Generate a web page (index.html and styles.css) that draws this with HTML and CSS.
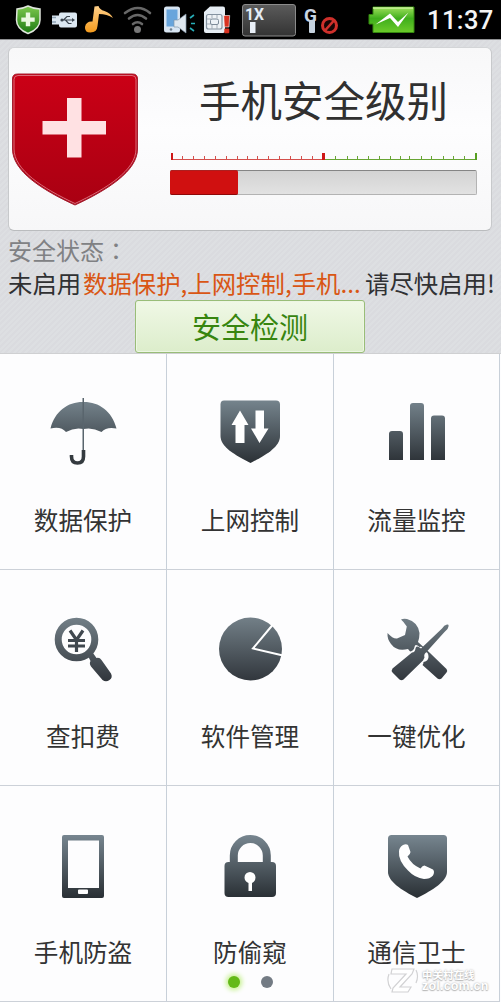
FILE: index.html
```html
<!DOCTYPE html>
<html lang="zh-CN">
<head>
<meta charset="utf-8">
<title>手机安全</title>
<link rel="stylesheet" href="styles.css">
</head>
<body>
<div class="phone">
  <div class="statusbar">
    <svg class="status-icons" width="420" height="39" viewBox="0 0 420 39">
      <defs>
        <linearGradient id="gshield" x1="0" y1="0" x2="0" y2="1"><stop offset="0" stop-color="#7cc84c"/><stop offset="1" stop-color="#1c7a12"/></linearGradient>
        <linearGradient id="note" x1="0" y1="0" x2="0" y2="1"><stop offset="0" stop-color="#ffd08a"/><stop offset="1" stop-color="#f39a1c"/></linearGradient>
        <linearGradient id="sig" x1="0" y1="0" x2="0" y2="1"><stop offset="0" stop-color="#5b5b5b"/><stop offset="1" stop-color="#333"/></linearGradient>
        <linearGradient id="bat" x1="0" y1="0" x2="0" y2="1"><stop offset="0" stop-color="#9fe05c"/><stop offset=".45" stop-color="#3fae1c"/><stop offset="1" stop-color="#6ccb2a"/></linearGradient>
      </defs>
      <path d="M17 9q5 0 11-3q6 3 12 3v11q0 9-12 13.500Q16.500 29 16.500 20z" fill="url(#gshield)" stroke="#dfe5dc" stroke-width="1.500"/>
      <path d="M25.800 12.500h4.400v5h4.500v4.300h-4.500v4.500h-4.400v-4.500h-4.500v-4.300h4.500z" fill="#eaf8e0"/>
      <path d="M52 15.500h7v-1q0-2 2-2h14q2 0 2 2v11q0 2-2 2H61q-2 0-2-2v-1h-7z" fill="#dce8f2"/>
      <path d="M52 17.500h4M52 22h4" stroke="#8fa3b5" stroke-width="1.500"/>
      <path d="M61 20h12M63.500 20l3.500-3.500h3M65.500 20l3 3.500h3" fill="none" stroke="#3c4650" stroke-width="1.200"/><circle cx="62" cy="20" r="1.600" fill="#3c4650"/><path d="M72 18l3 2-3 2z" fill="#3c4650"/>
      <path d="M94.500 6.500l4-.5q1 3.500 6 5 6 2 8.500 7-6-4-14-4l-1.500 12q-.5 6.500-7 6.500-6 0-5.500-5.500 1-6 7.500-5.500z" fill="url(#note)"/>
      <g fill="none" stroke="#686868" stroke-width="2.600" stroke-linecap="round"><path d="M125 13q13-10 25 0"/><path d="M129 18.500q8.500-7 17 0"/><path d="M133 24q4.500-3.500 9 0"/></g><circle cx="137.500" cy="29.500" r="3.500" fill="#777"/>
      <rect x="164" y="6.500" width="16" height="26" rx="2.500" fill="#d8e5f2"/><rect x="166.500" y="9.500" width="11" height="17" fill="#68a5dc"/><circle cx="171" cy="29.500" r="1.300" fill="#70808e"/>
      <path d="M174 20h4l8-6v19l-8-6h-4z" fill="#dfe8f0" stroke="#8295a8" stroke-width=".7"/><path d="M190 18l4-3M191 23.500h4M190 28l4 3" stroke="#27aeb8" stroke-width="1.600"/>
      <path d="M204 12l6-5.500h13q2 0 2 2V31q0 2-2 2h-17q-2 0-2-2z" fill="#e6edf3"/><rect x="206.500" y="14.500" width="15.500" height="14.500" rx="2" fill="#eef2f5" stroke="#8593a0" stroke-width="1.200"/><path d="M207 19h4M207 24h4M212 15v3M217 15v3M212 25v4M217 25v4" stroke="#a3adb7"/><rect x="210.500" y="19" width="8" height="5.500" rx="1.500" fill="#edf2f6" stroke="#7d8b98"/>
      <path d="M223.700 15.500h6l-.7 11.500h-4.600z" fill="#d93220" stroke="#fff" stroke-width=".6"/><rect x="224.300" y="28.500" width="5" height="4.800" rx="1" fill="#d93220"/>
      <rect x="242.500" y="4.500" width="53" height="31.500" rx="2.500" fill="url(#sig)" stroke="#8b8b8b"/>
      <text class="net-label" x="245" y="20" textLength="19" lengthAdjust="spacingAndGlyphs">1X</text><rect x="250" y="22" width="5.500" height="11" fill="#e9eff7"/>
      <text class="net-g" x="304" y="22">G</text><rect x="309" y="20" width="6" height="13" rx="1" fill="#c6d2de"/>
      <circle cx="329.500" cy="25.500" r="7" fill="#160505" stroke="#cf302b" stroke-width="3"/><path d="M325 30.500l9-10" stroke="#cf302b" stroke-width="2.600"/>
      <path d="M369 14.500h4v-7.500h41v25.500h-41v-8.500h-4z" fill="url(#bat)" stroke="#35880f"/><path d="M373 8h40" stroke="#c8f09a" stroke-width="1.400"/>
      <path d="M375.500 24.500L390 13.500l8 8.500 10.500-9.500-10.500 14.500-8-9z" fill="#fff"/>
    </svg>
    <span class="clock">11:37</span>
  </div>

  <div class="header">
    <div class="level-card">
      <svg class="level-shield" width="128" height="134" viewBox="11 73 128 134">
        <defs><linearGradient id="red" x1="0" y1="0" x2="0" y2="1"><stop offset="0" stop-color="#cb0016"/><stop offset="1" stop-color="#a90012"/></linearGradient></defs>
        <path d="M17.500 74h115q5 0 5 5v70c0 22-30 41-62.500 56C42 190 12.500 171 12.500 149V79q0-5 5-5z" fill="url(#red)" stroke="#a32030" stroke-width="1"/>
        <path d="M18 75.500h114q4 0 4 4v69.500c0 21-29 39.500-61 54.500C43 188.500 14 170 14 149V79.500q0-4 4-4z" fill="none" stroke="#dc7884" stroke-width=".9"/>
        <path d="M67 98h14.500v23H106v13.500H81.500v23H67v-23H42.500V121H67z" fill="#ffe1e3"/>
      </svg>
      <div class="level-info">
        <h1 class="level-title">手机安全级别</h1>
        <svg class="scale" width="307" height="8" viewBox="0 0 307 8">
          <path d="M1 6h152v1H1zM12 3h1v3h-1zM23 3h1v3h-1zM34 3h1v3h-1zM45 3h1v3h-1zM56 3h1v3h-1zM67 3h1v3h-1zM77 3h1v3h-1zM87 3h1v3h-1zM98 3h1v3h-1zM109 3h1v3h-1zM120 3h1v3h-1zM131 3h1v3h-1zM142 3h1v3h-1z" fill="#d4504c"/>
          <path d="M155 6h152v1H155zM165 3h1v3h-1zM177 3h1v3h-1zM187 3h1v3h-1zM198 3h1v3h-1zM209 3h1v3h-1zM220 3h1v3h-1zM230 3h1v3h-1zM239 3h1v3h-1zM251 3h1v3h-1zM261 3h1v3h-1zM273 3h1v3h-1zM283 3h1v3h-1zM294 3h1v3h-1z" fill="#68a534"/>
          <path d="M1 0h2v7H1zM152 0h3v7h-3z" fill="#ce1717"/><path d="M305 0h2v7h-2z" fill="#579f22"/>
        </svg>
        <div class="meter"><div class="meter-fill"></div></div>
      </div>
    </div>
    <div class="state-label">安全状态<span class="colon" lang="zh-TW">：</span></div>
    <div class="state-line"><span class="lead">未启用</span><span class="missing">数据保护,上网控制,手机...</span><span class="tail">请尽快启用!</span></div>
    <div class="check-btn">安全检测</div>
  </div>

  <div class="grid">
    <div class="cell">
      <svg class="icon" viewBox="43 393 80 80">
        <defs><linearGradient id="m1" gradientUnits="userSpaceOnUse" x1="0" y1="398" x2="0" y2="465"><stop offset="0" stop-color="#788790"/><stop offset="1" stop-color="#292e33"/></linearGradient></defs>
        <path d="M50.500 428.500C55 411 68 402 82.500 402h1.500c15 0 28 9 32.500 26.500q-10-2-15 3.500-9-5-18-3-9-2-17.500 3-5-6-15.500-3.500z" fill="url(#m1)"/>
        <path d="M82.500 398h1.500v53h-1.500z" fill="#59656d"/><path d="M83.500 450v6.500q0 6.500-6 6.500t-6-6.500v-1.500" fill="none" stroke="#343a3f" stroke-width="3.600"/>
      </svg><span class="label">数据保护</span>
    </div>
    <div class="cell">
      <svg class="icon" viewBox="210 393 80 80">
        <path d="M224 400.500h52q4 0 4 4V436c0 11-14 19-29.500 27-15.500-8-30-16-30-27v-31.500q0-4 3.500-4z" fill="url(#m1)"/>
        <path d="M240 410.500l8.500 14.500h-4v18h-9v-18h-4zM255.500 410.500h8.500v18h4.500l-9 14.500-8.500-14.500h4.500z" fill="#fff"/>
      </svg><span class="label">上网控制</span>
    </div>
    <div class="cell">
      <svg class="icon" viewBox="377 393 80 80">
        <path d="M389 460v-26q0-3 3-3h8q3 0 3 3v26zM410 460v-54q0-3 3-3h8q3 0 3 3v54zM431 460v-41.500q0-3 3-3h8q3 0 3 3V460z" fill="url(#m1)"/>
      </svg><span class="label">流量监控</span>
    </div>

    <div class="cell">
      <svg class="icon" viewBox="43 609 80 80">
        <defs><linearGradient id="m2" gradientUnits="userSpaceOnUse" x1="0" y1="617" x2="0" y2="682"><stop offset="0" stop-color="#738088"/><stop offset="1" stop-color="#30353b"/></linearGradient></defs>
        <circle cx="76.500" cy="639.500" r="18.300" fill="none" stroke="url(#m2)" stroke-width="7"/>
        <path d="M88.500 657l4.500-4 3.500 5q3-1 5 2l9.500 13.500q2 4-1.500 6.500t-7 0L91 666.500q-2-3-.5-5.500z" fill="url(#m2)"/>
        <path d="M70 630.500l6.500 9.500L83 630.500M68 640.500h17M68 646h17M76.500 639v13" fill="none" stroke="#40484f" stroke-width="3.200"/>
      </svg><span class="label">查扣费</span>
    </div>
    <div class="cell">
      <svg class="icon" viewBox="210 609 80 80">
        <circle cx="250.500" cy="649" r="31.500" fill="url(#m2)"/><path d="M272.500 625L253 648.500l30 7" fill="none" stroke="#fff" stroke-width="2"/>
      </svg><span class="label">软件管理</span>
    </div>
    <div class="cell">
      <svg class="icon" viewBox="377 609 80 80">
        <path d="M401 619.500q2-1 6-.5 11 3 12.500 14 0 5-1.500 9l12 11 16.500 16q1.500 2 0 3.500l-5 6q-2 1.500-4 0L418 661l-10-12q-11 3-17-5-4-5-3.500-11 5.500 6 9.500 5.500l8-3.500 1.800-8.500q-3.300-5-5.800-7z" fill="url(#m2)"/>
        <path d="M409 652q5-1 5.500-5t5 0q4-1 3.500 5 5-1 5.500 4t-5 6q0 5-6 4z" fill="#fdfdfe"/>
        <path d="M442 628.500q2-3.500 5-4t.5 4.500l-3 3-18.500 20.500q-2.500 2-1.500 5l-1.500 3-19.500 19q-2 1.500-4 0l-7-7q-1.500-2 0-4l19.500-16q3 0 3.500-4t5.500 0z" fill="url(#m2)"/>
      </svg><span class="label">一键优化</span>
    </div>

    <div class="cell">
      <svg class="icon" viewBox="43 825 80 80">
        <defs><linearGradient id="m3" gradientUnits="userSpaceOnUse" x1="0" y1="834" x2="0" y2="898"><stop offset="0" stop-color="#788791"/><stop offset="1" stop-color="#292f34"/></linearGradient></defs>
        <path fill-rule="evenodd" d="M64 835h38q2 0 2 2v59q0 2-2 2H64q-2 0-2-2v-59q0-2 2-2zM68 840.500v47.500h31v-47.500zM79 889.500q-1 0-1 1v2.500q0 1 1 1h8q1 0 1-1v-2.500q0-1-1-1z" fill="url(#m3)"/>
      </svg><span class="label">手机防盗</span>
    </div>
    <div class="cell">
      <svg class="icon" viewBox="210 825 80 80">
        <path d="M233.800 866v-10.500a16.500 16.500 0 0 1 33 0V866" fill="none" stroke="url(#m3)" stroke-width="8"/>
        <rect x="224.500" y="862" width="51.500" height="35" rx="4" fill="url(#m3)"/>
        <path d="M248.500 891v-8q-4-2-4-5.500a5.500 5.500 0 0 1 11 0q0 3.500-3.500 5.500v8z" fill="#fff"/>
      </svg><span class="label">防偷窥</span>
    </div>
    <div class="cell">
      <svg class="icon" viewBox="377 825 80 80">
        <path d="M391.500 835h52q3.500 0 3.500 3.500V872c0 9-14 18-30 26-16-8-29-17-29-26v-33.500q0-3.500 3.500-3.500z" fill="url(#m3)"/>
        <path d="M403 845q3-1.500 5 0l2.500 7q0 2-3 4.500 4 8 13 12 3-4 5-2.500l7.500 3.500q2 2 0 6-3 3.500-9 3.500-9-1-16-8.500-10-10-9-19 0-4 4-6.500z" fill="#fff"/>
      </svg><span class="label">通信卫士</span>
    </div>
    <div class="pager"><i class="dot active"></i><i class="dot"></i></div>
    <div class="watermark">
      <svg width="32" height="30" viewBox="0 0 32 30"><path d="M5 4h22l-2 5-12 13h11l-3 5H5l1-4L19 9H4zM2 9q-3 8 2 15M29 5q3 6 0 13" fill="#fff" stroke="#d2d2d4" stroke-width="1.200"/></svg>
      <div class="wm-text"><span class="wm-cn">中关村在线</span><span class="wm-en">zol.com.cn</span></div>
    </div>
  </div>
</div>
</body>
</html>
```

FILE: styles.css
```css
* { box-sizing: border-box; }
body { margin: 0; background: #fdfdfe; font-family: "Noto Sans CJK SC", sans-serif; color: #333; }
.phone { width: 501px; height: 1002px; overflow: hidden; display: flex; flex-direction: column; }

.statusbar { height: 40px; flex: none; background: #000; border-bottom: 1px solid #8f9092; display: flex; justify-content: space-between; }
.clock { font: 500 25.500px/40px Roboto, sans-serif; color: #f4f4f4; width: 74px; letter-spacing: .4px; white-space: nowrap; }
.net-label { font: bold 17px Roboto, sans-serif; fill: #e3ecf6; }
.net-g { font: bold 19px Roboto, sans-serif; fill: #c9d5e3; }

.header {
  height: 314px; flex: none; padding: 7px 8px 0; border-bottom: 1px solid #cfd0d2;
  background: repeating-linear-gradient(135deg, #dadbdf 0 2px, #dddfe2 2px 4px);
}
.level-card {
  height: 184px; width: 484px; padding: 25px 0 0 3px; display: flex;
  border: 1px solid #c7c9cb; border-color: #d3d5d7 #c7c9cb #babcbe; border-radius: 6px;
  background: linear-gradient(#f8f8f9, #fdfdfe 45%, #f7f7f8);
}
.level-shield { flex: none; display: block; margin-left: -1px; }
.level-info { margin-left: 31px; width: 307px; }
.level-title { margin: -2px 0 0; padding-left: 29px; font-weight: 400; font-size: 41.500px; line-height: 56px; color: #303030; white-space: nowrap; }
.scale { display: block; margin-top: 26px; }
.meter { margin-top: 9px; width: 307px; height: 25px; border: 1px solid #b3b3b3; border-top-color: #858585; border-radius: 2px; background: linear-gradient(#d3d3d3, #e2e2e2); }
.meter-fill { width: 68px; height: 25px; margin: -1px; background: #d01010; border-bottom: 1px solid #8e0808; border-top: 1px solid #ab2020; border-radius: 2px; }

.state-label { margin-top: 2px; font-size: 24px; line-height: 34px; color: #808184; }
.colon { font-family: "Noto Sans CJK TC", sans-serif; }
.state-line { display: flex; width: 500px; margin-top: -1px; font-size: 24.400px; line-height: 34px; white-space: nowrap; }
.lead { width: 75px; color: #303133; }
.missing { width: 282px; color: #d95614; }
.tail { color: #303133; }
.check-btn {
  width: 230px; height: 53px; margin: 0 0 0 127px; text-align: center; font-size: 29px; line-height: 51px; color: #37850f;
  border: 1px solid #99bd78; border-radius: 3px; background: linear-gradient(#f0f8e6, #dcedcb); box-shadow: inset 0 0 0 1px #edf6e3;
}

.grid { position: relative; flex: none; display: grid; grid-template-columns: 167px 167px 166px; grid-template-rows: repeat(3, 216px); }
.cell { display: flex; flex-direction: column; align-items: center; padding-top: 39px; border-right: 1px solid #c8d0d9; border-bottom: 1px solid #ccd1d8; background: #fdfdfe; }
.icon { width: 80px; height: 80px; display: block; flex: none; }
.label { margin-top: 33px; font-size: 24.600px; line-height: 26px; color: #333; white-space: nowrap; }

.pager { position: absolute; left: 228px; top: 622px; display: flex; align-items: center; gap: 21px; }
.dot { width: 12px; height: 12px; border-radius: 50%; background: #737b84; }
.dot.active { background: #63b918; box-shadow: 0 0 5px 2px #c3f08a; }
.watermark { position: absolute; left: 387px; top: 611px; display: flex; align-items: center; gap: 3px; }
.wm-text { display: flex; flex-direction: column; color: #fff; text-shadow: 0 0 2px #aaa, 0 1px 1px #bbb; font-weight: 700; }
.wm-cn { font-size: 10.500px; line-height: 11px; }
.wm-en { font: bold 12.500px/12px "Liberation Sans", sans-serif; letter-spacing: .2px; }
```
